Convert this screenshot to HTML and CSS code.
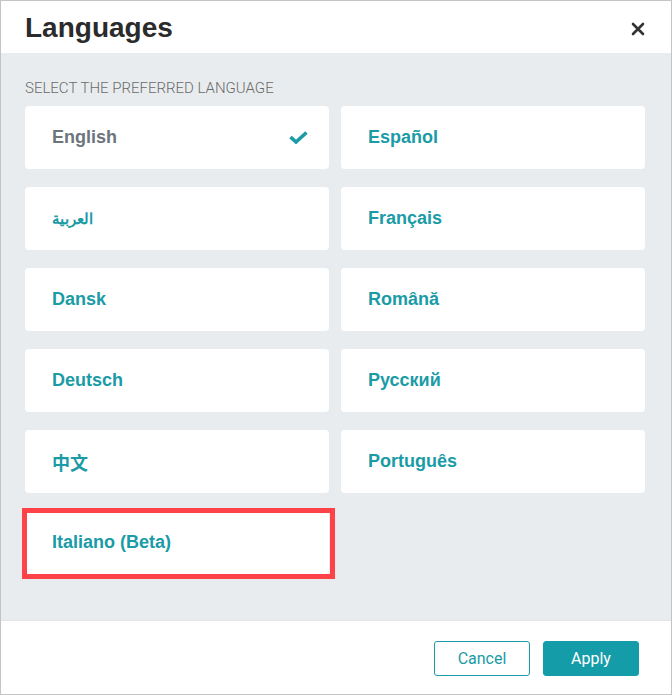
FILE: index.html
```html
<!DOCTYPE html>
<html lang="en">
<head>
  <meta charset="UTF-8">
  <meta name="viewport" content="width=device-width, initial-scale=1.0">
  <title>Languages</title>
  <link rel="stylesheet" href="styles.css">
</head>
<body>
  <div class="dialog">
    <div class="dialog-header">
      <h1>Languages</h1>
      <button class="close" aria-label="Close">
        <svg width="14" height="14" viewBox="0 0 14 14"><path d="M2 2L12 12M12 2L2 12" stroke="#333" stroke-width="2.6" stroke-linecap="round"/></svg>
      </button>
    </div>

    <div class="dialog-body">
      <div class="label">Select the preferred language</div>
      <div class="lang-grid">
        <div class="lang selected">English
          <svg class="check" width="19" height="13" viewBox="0 0 19 13"><path d="M1.5 6L7 11L17.5 1.5" fill="none" stroke="#1a9ba6" stroke-width="3.6"/></svg>
        </div>
        <div class="lang">Español</div>
        <div class="lang arabic" lang="ar">العربية</div>
        <div class="lang">Français</div>
        <div class="lang">Dansk</div>
        <div class="lang">Română</div>
        <div class="lang">Deutsch</div>
        <div class="lang">Русский</div>
        <div class="lang cjk" lang="zh">中文</div>
        <div class="lang">Português</div>
        <div class="lang highlight">Italiano (Beta)</div>
      </div>
    </div>

    <div class="dialog-footer">
      <button class="btn btn-outline">Cancel</button>
      <button class="btn btn-primary">Apply</button>
    </div>
  </div>
</body>
</html>
```

FILE: styles.css
```css
body {
  margin: 0;
  font-family: Roboto, 'Liberation Sans', Arial, sans-serif;
  color: #333;
}
.dialog {
  width: 672px;
  height: 695px;
  box-sizing: border-box;
  border: 1px solid #c4c4c4;
  display: flex;
  flex-direction: column;
  background: #fff;
}
.dialog-header {
  height: 52px;
  flex: none;
  display: flex;
  align-items: center;
  justify-content: space-between;
  padding: 0 26px 0 24px;
}
.dialog-header h1 {
  margin: 0;
  font-family: 'Liberation Sans', Arial, sans-serif;
  font-size: 28px;
  font-weight: bold;
  color: #2b2b2b;
  padding-top: 2px;
}
.close {
  border: 0;
  background: none;
  padding: 0;
  width: 14px;
  height: 14px;
  display: flex;
  margin-top: 4px;
}
.dialog-body {
  flex: 1;
  background: #e9ecee;
  padding: 27px 26px 0 24px;
}
.label {
  font-family: Roboto, sans-serif;
  font-size: 15px;
  font-weight: 300;
  text-transform: uppercase;
  color: #6a6a6a;
  line-height: 16px;
  margin-bottom: 10px;
}
.lang-grid {
  display: grid;
  grid-template-columns: 304px 304px;
  column-gap: 12px;
  row-gap: 18px;
}
.lang {
  position: relative;
  height: 63px;
  background: #fff;
  border-radius: 4px;
  display: flex;
  align-items: center;
  justify-content: space-between;
  padding: 0 21px 0 27px;
  font-family: 'Liberation Sans', Arial, sans-serif;
  font-size: 18px;
  font-weight: bold;
  color: #1a9ba6;
}
.lang.selected {
  color: #6c757d;
}
.lang.arabic {
  font-size: 15px;
}
.lang.cjk {
  font-family: 'Noto Sans CJK SC', sans-serif;
  font-size: 18px;
}
.lang.highlight::after {
  content: "";
  position: absolute;
  top: -3px;
  left: -3px;
  right: -6px;
  bottom: -5px;
  border: 5px solid #fd4347;
  pointer-events: none;
}
.dialog-footer {
  height: 74px;
  flex: none;
  box-sizing: border-box;
  border-top: 1px solid #e3e6e8;
  display: flex;
  justify-content: flex-end;
  align-items: flex-start;
  gap: 13px;
  padding: 20px 32px 0 0;
}
.btn {
  width: 96px;
  height: 35px;
  border-radius: 3px;
  font-family: Roboto, sans-serif;
  font-size: 16px;
  cursor: pointer;
}
.btn-outline {
  background: #fff;
  border: 1px solid #1a9ba6;
  color: #1a9ba6;
}
.btn-primary {
  background: #149ca8;
  border: 1px solid #149ca8;
  color: #fff;
}
```
